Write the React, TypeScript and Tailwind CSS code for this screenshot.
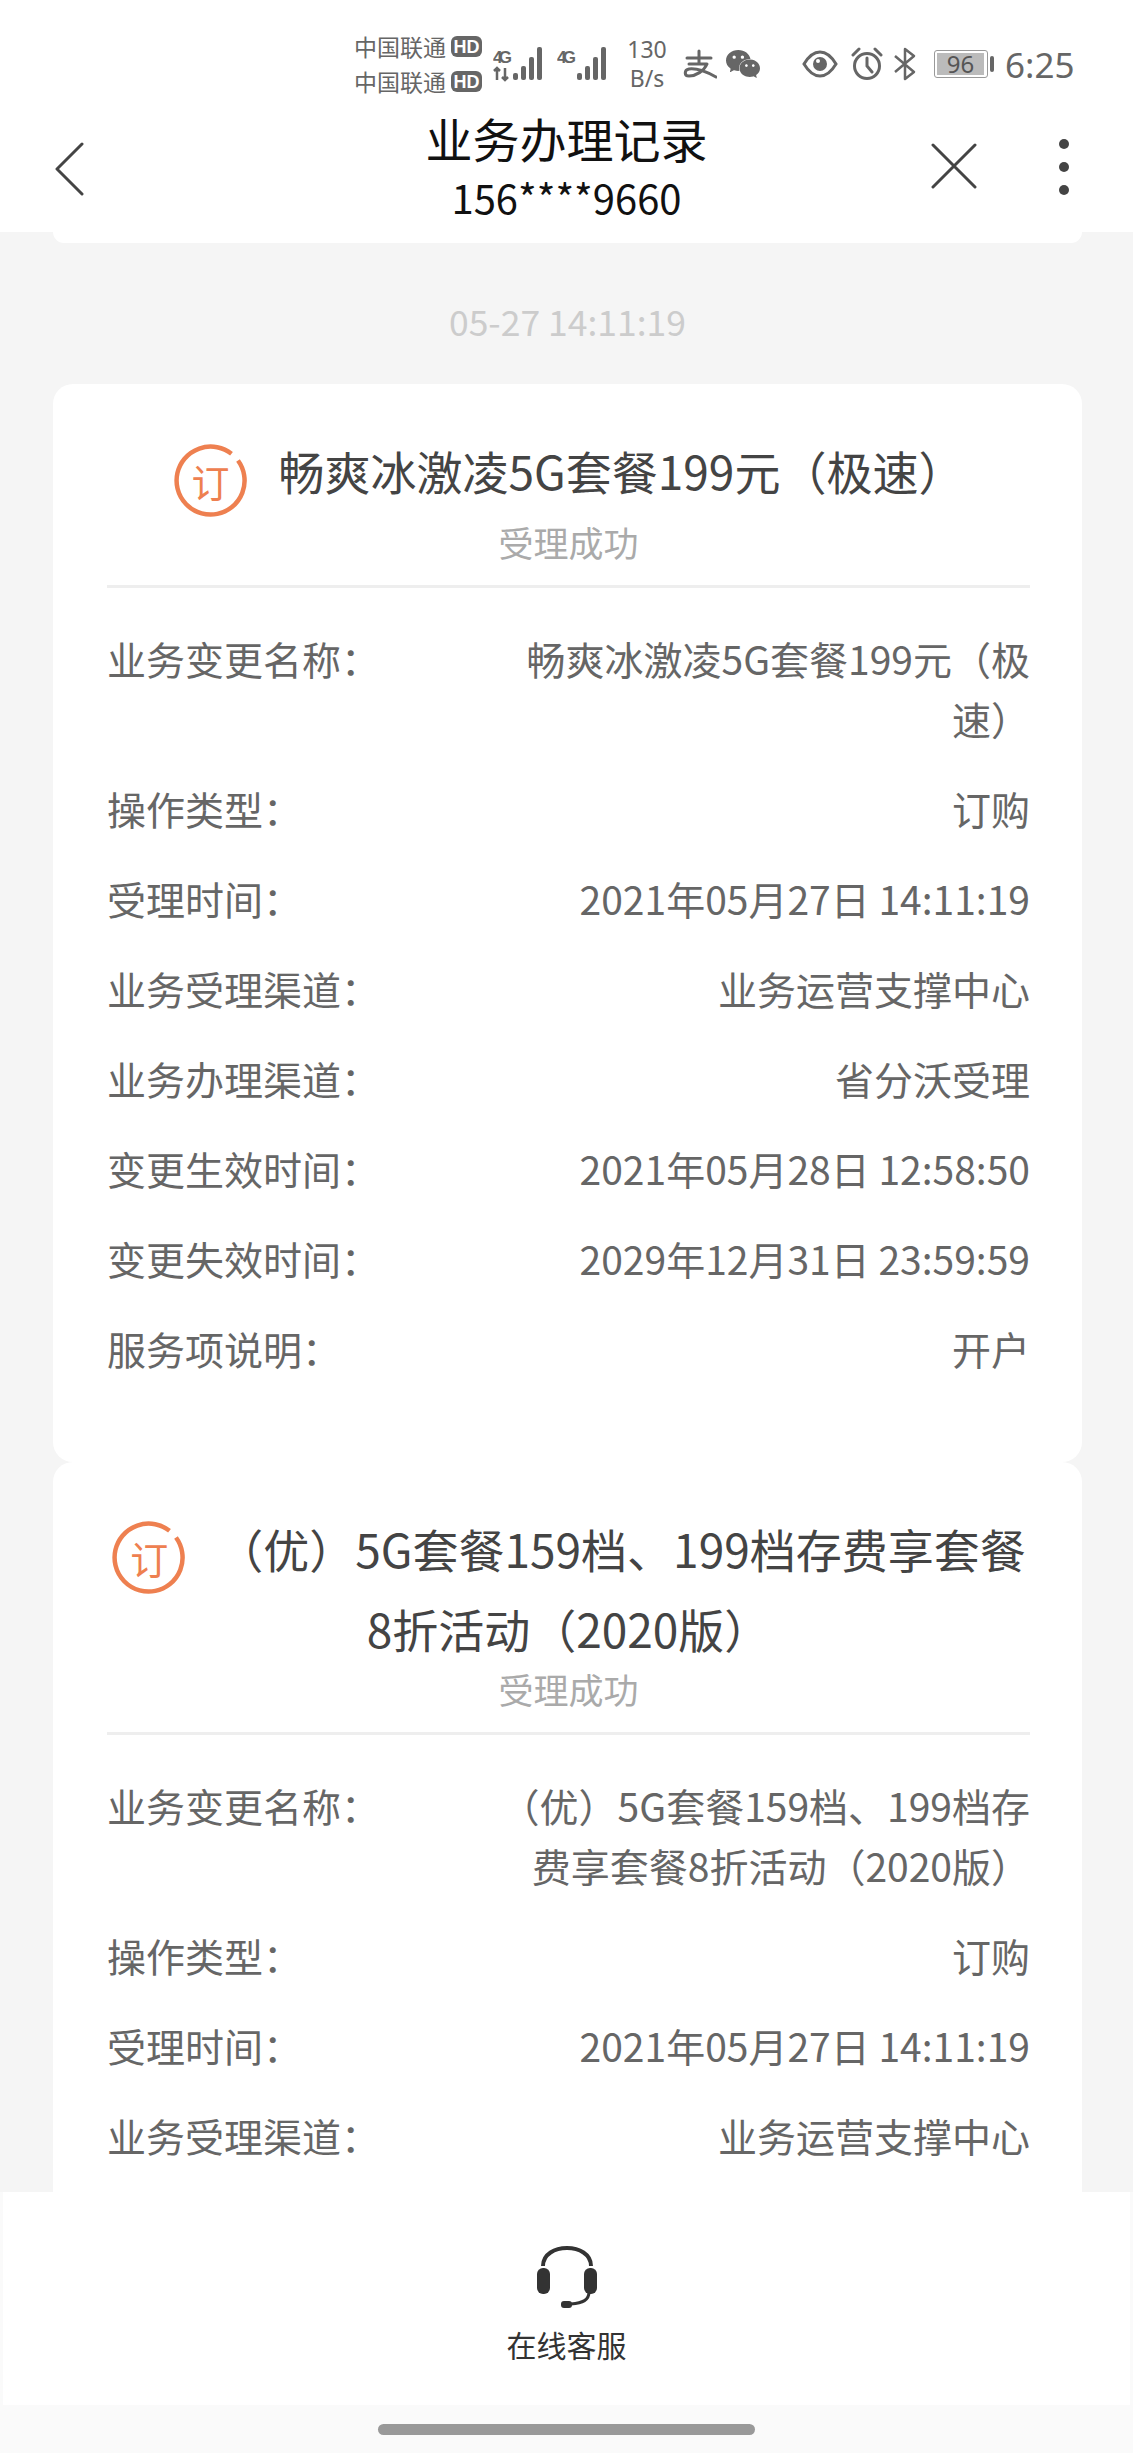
import { SiWechat } from 'react-icons/si'

const cjk = "font-['Noto_Sans_CJK_SC','Noto_Sans',sans-serif]"

interface Row {
  label: string
  value: string
}

const firstRows: Row[] = [
  { label: '业务变更名称：', value: '畅爽冰激凌5G套餐199元（极速）' },
  { label: '操作类型：', value: '订购' },
  { label: '受理时间：', value: '2021年05月27日 14:11:19' },
  { label: '业务受理渠道：', value: '业务运营支撑中心' },
  { label: '业务办理渠道：', value: '省分沃受理' },
  { label: '变更生效时间：', value: '2021年05月28日 12:58:50' },
  { label: '变更失效时间：', value: '2029年12月31日 23:59:59' },
  { label: '服务项说明：', value: '开户' },
]

const secondRows: Row[] = [
  { label: '业务变更名称：', value: '（优）5G套餐159档、199档存费享套餐8折活动（2020版）' },
  { label: '操作类型：', value: '订购' },
  { label: '受理时间：', value: '2021年05月27日 14:11:19' },
  { label: '业务受理渠道：', value: '业务运营支撑中心' },
]

function OrderIcon() {
  return (
    <span className="relative top-[3px] mr-[30px] inline-block h-[76px] w-[76px] align-middle">
      <svg viewBox="0 0 76 76" className="h-full w-full" fill="none">
        <path d="M58.5 10.8 A34 34 0 1 0 65 17.5" stroke="#ee8050" strokeWidth="4.5" />
      </svg>
      <span className="absolute inset-0 flex items-center justify-center text-[38px] leading-none text-[#ee8050]">
        订
      </span>
    </span>
  )
}

function Signal({ second }: { second?: boolean }) {
  return (
    <svg viewBox="0 0 54 36" className="h-[36px] w-[54px]" fill="#666">
      <text x="0" y="17" fontSize="17" fontWeight="700" fontFamily="Liberation Sans" textLength="19">
        4G
      </text>
      {second ? (
        <path d="M4 22 V34 M1 25 L4 22 L7 25 M12 22 V34 M9 31 L12 34 L15 31" fill="none" stroke="#666" strokeWidth="2.5" />
      ) : null}
      <rect x="20" y="27" width="5" height="7" rx="2" />
      <rect x="28" y="20" width="5" height="14" rx="2" />
      <rect x="36" y="11" width="5" height="23" rx="2" />
      <rect x="44" y="1" width="5" height="33" rx="2" />
    </svg>
  )
}

function StatusBar() {
  return (
    <div className="flex h-[74px] items-center pl-[354px] text-[#666]">
      <div className="flex w-[128px] flex-col gap-[12px] text-[23px] leading-[23px]">
        {[0, 1].map((i) => (
          <div key={i} className="flex items-center justify-between">
            <span>中国联通</span>
            <span className="flex h-[21px] w-[31px] items-center justify-center rounded-[6px] bg-[#666] font-['Liberation_Sans'] text-[18px] font-bold leading-none text-white">
              HD
            </span>
          </div>
        ))}
      </div>
      <div className="ml-[11px]">
        <Signal second />
      </div>
      <div className="ml-[10px]">
        <Signal />
      </div>
      <div className="ml-[14px] flex w-[44px] flex-col items-center font-['Noto_Sans'] text-[23px] leading-[29px]">
        <span>130</span>
        <span>B/s</span>
      </div>
      <svg viewBox="0 0 34 30" className="ml-[14px] h-[30px] w-[34px]" fill="none" stroke="#666" strokeWidth="3" strokeLinecap="round" strokeLinejoin="round">
        <path d="M4 9 H28 M16 2 V15 M6 15 H24 C21 22 13 27 6 27 C1 27 1 21 6 20 C14 19 24 23 33 28" />
      </svg>
      <SiWechat className="ml-[8px] h-[34px] w-[36px] text-[#666]" />
      <svg viewBox="0 0 36 28" className="ml-[41px] h-[28px] w-[36px]" fill="none" stroke="#666" strokeWidth="3">
        <path d="M2 14 C8 4 13 2 18 2 C23 2 28 4 34 14 C28 24 23 26 18 26 C13 26 8 24 2 14 Z" />
        <circle cx="18" cy="14" r="7" fill="#666" stroke="none" />
        <circle cx="16" cy="11" r="2" fill="#fff" stroke="none" />
      </svg>
      <svg viewBox="0 0 34 34" className="ml-[12px] h-[34px] w-[34px]" fill="none" stroke="#666" strokeWidth="3" strokeLinecap="round">
        <circle cx="17" cy="19" r="12.5" />
        <path d="M17 11 V19 L22 25 M3 8 L9 2 M31 8 L25 2" />
      </svg>
      <svg viewBox="0 0 24 34" className="ml-[9px] h-[34px] w-[24px]" fill="none" stroke="#666" strokeWidth="2.5" strokeLinejoin="round">
        <path d="M2 9 L21 25 L12 32 V2 L21 9 L2 25" />
      </svg>
      <div className="ml-[17px] flex items-center gap-[2px]">
        <div className="flex h-[28px] w-[54px] items-center rounded-[3px] border border-[#999] p-[2px]">
          <div className="flex h-full w-[47px] items-center justify-center bg-[#bbb] font-['Noto_Sans'] text-[24px] leading-none text-[#555]">
            96
          </div>
        </div>
        <div className="h-[16px] w-[4px] rounded-[2px] bg-[#666]" />
      </div>
      <span className="ml-[11px] font-['Noto_Sans'] text-[35px] leading-none text-[#666]">6:25</span>
    </div>
  )
}

function Header() {
  return (
    <header className="relative h-[131px] bg-white pt-[7px] text-center text-[#111]">
      <div className="text-[47px] leading-[60px]">业务办理记录</div>
      <div className="text-[40px] leading-[58px]">156****9660</div>
      <svg viewBox="0 0 30 54" className="absolute left-[54px] top-[41px] h-[54px] w-[30px]" fill="none" stroke="#444" strokeWidth="3" strokeLinecap="round" strokeLinejoin="round">
        <path d="M28 2 L3 27 L28 52" />
      </svg>
      <svg viewBox="0 0 46 46" className="absolute left-[931px] top-[42px] h-[46px] w-[46px]" fill="none" stroke="#444" strokeWidth="3" strokeLinecap="round">
        <path d="M2 2 L44 44 M44 2 L2 44" />
      </svg>
      <div className="absolute left-[1059px] top-[38px] flex flex-col gap-[13px]">
        <span className="h-[10px] w-[10px] rounded-full bg-[#444]" />
        <span className="h-[10px] w-[10px] rounded-full bg-[#444]" />
        <span className="h-[10px] w-[10px] rounded-full bg-[#444]" />
      </div>
    </header>
  )
}

function RecordCard({ title, rows, rounded }: { title: string; rows: Row[]; rounded: string }) {
  return (
    <section className={`bg-white pl-[54px] pr-[52px] pt-[51px] ${rounded}`}>
      <div className="text-center text-[46px] leading-[70px] text-[#444]">
        <OrderIcon />
        {title}
      </div>
      <div className="border-b-[3px] border-[#eeeeee] pb-[17px] text-center text-[35px] leading-[52px] text-[#aaa]">
        受理成功
      </div>
      <div className="pb-[54px] pt-[40px] text-[39px] text-[#666]">
        {rows.map((row) => (
          <div key={row.label} className="mb-[30px] flex items-start justify-between leading-[60px]">
            <span className="shrink-0 whitespace-nowrap">{row.label}</span>
            <span className="w-[530px] text-right">{row.value}</span>
          </div>
        ))}
      </div>
    </section>
  )
}

export default function App() {
  return (
    <div className={`flex h-[2453px] w-[1133px] flex-col overflow-hidden bg-[#f5f5f5] ${cjk}`}>
      <div className="bg-white pt-[27px]">
        <StatusBar />
        <Header />
      </div>

      <main className="min-h-0 flex-1 overflow-hidden pl-[53px] pr-[51px]">
        <div className="h-[11px] rounded-b-[24px] bg-white" />
        <div className="flex h-[141px] items-center justify-center pt-[14px] text-[35.5px] text-[#ccc]">05-27 14:11:19</div>
        <RecordCard title="畅爽冰激凌5G套餐199元（极速）" rows={firstRows} rounded="rounded-[20px]" />
        <RecordCard
          title="（优）5G套餐159档、199档存费享套餐8折活动（2020版）"
          rows={secondRows}
          rounded="rounded-t-[20px]"
        />
      </main>

      <footer className="h-[261px] bg-[#fafafa]">
        <div className="mx-[3px] flex h-[213px] flex-col items-center bg-white pt-[54px]">
          <svg viewBox="0 0 60 62" className="h-[62px] w-[60px]" fill="#333">
            <path d="M6 20 C6 -4 54 -4 54 20" fill="none" stroke="#333" strokeWidth="4" />
            <rect x="0" y="22" width="13" height="26" rx="6" />
            <rect x="47" y="22" width="13" height="26" rx="6" />
            <path d="M52 46 C52 54 46 57 34 58" fill="none" stroke="#333" strokeWidth="3" />
            <rect x="24" y="55" width="11" height="7" rx="3" />
          </svg>
          <span className="mt-[14px] text-[30px] leading-[44px] text-[#333]">在线客服</span>
        </div>
        <div className="mx-auto mt-[19px] h-[11px] w-[377px] rounded-full bg-[#999]" />
      </footer>
    </div>
  )
}
